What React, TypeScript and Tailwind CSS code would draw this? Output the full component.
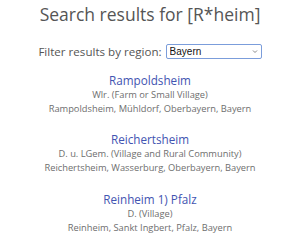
const results = [
    {
        name: 'Rampoldsheim',
        kind: 'Wlr. (Farm or Small Village)',
        place: 'Rampoldsheim, Mühldorf, Oberbayern, Bayern',
    },
    {
        name: 'Reichertsheim',
        kind: 'D. u. LGem. (Village and Rural Community)',
        place: 'Reichertsheim, Wasserburg, Oberbayern, Bayern',
    },
    {
        name: 'Reinheim 1) Pfalz',
        kind: 'D. (Village)',
        place: 'Reinheim, Sankt Ingbert, Pfalz, Bayern',
    },
];

const App = () => {
    return (
        <div className="w-[300px] h-[240px] overflow-hidden bg-white font-['Open_Sans',sans-serif] flex flex-col items-center">
            <h1 className="text-[17.5px] leading-[24px] text-[#555] mt-[2px] whitespace-nowrap">
                Search results for [R*heim]
            </h1>
            {/* region filter */}
            <div className="flex items-center mt-[18px] h-[15px] text-[11.6px] leading-[15px] text-[#555] whitespace-nowrap">
                <span>Filter results by region:</span>
                <div className="relative ml-[4px]">
                    <select
                        defaultValue="Bayern"
                        className="appearance-none block w-[96px] h-[15px] text-[10px] leading-[13px] text-[#111] font-['Liberation_Sans',sans-serif] border border-[#7b9ddb] rounded-[2px] pl-[3px] pr-[12px] bg-white outline-none"
                    >
                        <option>Bayern</option>
                    </select>
                    <svg
                        className="absolute right-[4px] top-[5px] w-[6px] h-[5px] pointer-events-none"
                        viewBox="0 0 6 5"
                        fill="none"
                    >
                        <path d="M1 1.5 L3 3.5 L5 1.5" stroke="#888" strokeWidth="1" />
                    </svg>
                </div>
            </div>
            <div className="flex flex-col items-center mt-[12.5px] gap-[15.5px]">
                {results.map((r) => (
                    <div key={r.name} className="flex flex-col items-center whitespace-nowrap">
                        <span className="text-[11.7px] leading-[16px] text-[#4254b1]">{r.name}</span>
                        <span className="text-[9.3px] leading-[14px] text-[#6e6e6e]">{r.kind}</span>
                        <span className="text-[9.3px] leading-[14px] text-[#6e6e6e]">{r.place}</span>
                    </div>
                ))}
            </div>
        </div>
    );
};

export default App;
